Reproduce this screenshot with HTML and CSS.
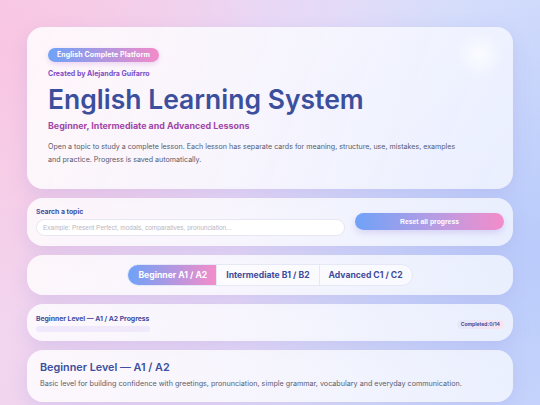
FILE: index.html
```html
<!DOCTYPE html>
<html lang="en">
<head>
<meta charset="utf-8">
<title>English Learning System</title>
<link rel="stylesheet" href="styles.css">
</head>
<body>
<main class="page">
  <section class="card hero">
    <span class="pill">English Complete Platform</span>
    <p class="author">Created by Alejandra Guifarro</p>
    <h1 class="title">English Learning System</h1>
    <h2 class="subtitle">Beginner, Intermediate and Advanced Lessons</h2>
    <p class="intro">Open a topic to study a complete lesson. Each lesson has separate cards for meaning, structure, use, mistakes, examples and practice. Progress is saved automatically.</p>
  </section>

  <section class="card search">
    <div class="search-field">
      <label class="label" for="q">Search a topic</label>
      <input id="q" class="input" type="text" placeholder="Example: Present Perfect, modals, comparatives, pronunciation...">
    </div>
    <button class="reset" type="button">Reset all progress</button>
  </section>

  <section class="card tabs-card">
    <div class="tabs">
      <button class="tab active" type="button">Beginner A1 / A2</button>
      <button class="tab" type="button">Intermediate B1 / B2</button>
      <button class="tab" type="button">Advanced C1 / C2</button>
    </div>
  </section>

  <section class="card progress">
    <div class="progress-info">
      <span class="label">Beginner Level — A1 / A2 Progress</span>
      <div class="bar"><div class="bar-fill" style="width:0%"></div></div>
    </div>
    <span class="done">Completed:0/14</span>
  </section>

  <section class="card level">
    <h3 class="level-title">Beginner Level — A1 / A2</h3>
    <p class="level-desc">Basic level for building confidence with greetings, pronunciation, simple grammar, vocabulary and everyday communication.</p>
  </section>
</main>
</body>
</html>
```

FILE: styles.css
```css
* { box-sizing: border-box; }
html, body { margin: 0; height: 100%; }
body {
  font-family: Inter, "Noto Sans", sans-serif;
  background:
    radial-gradient(circle at 0% 12%, #f9c6e2 0%, rgba(249,198,226,0) 42%),
    radial-gradient(circle at 102% 62%, #b9cbfb 0%, rgba(185,203,251,0) 52%),
    linear-gradient(100deg, #f5d4ec 0%, #e8d8f6 45%, #dbe1fb 75%, #d0dbfb 100%);
  overflow: hidden;
}
.page {
  padding: 27px 27px 0;
  display: flex;
  flex-direction: column;
  gap: 9px;
}
.card {
  background: linear-gradient(110deg, rgba(255,255,255,0.82), rgba(246,248,255,0.78));
  border-radius: 16px;
  box-shadow: 0 6px 18px rgba(150,140,220,0.22);
}
.hero {
  padding: 21px 20px 0 21px;
  height: 162px;
  background:
    radial-gradient(circle at 93% 17%, rgba(255,255,255,0.75) 0%, rgba(255,255,255,0) 5%),
    linear-gradient(110deg, rgba(255,255,255,0.84), rgba(244,246,255,0.8));
}
.pill {
  display: block;
  width: max-content;
  height: 14px;
  line-height: 14px;
  padding: 0 9px;
  border-radius: 8px;
  background: linear-gradient(90deg, #6ea2f8, #f28bc8);
  color: #fff;
  font-size: 7px;
  font-weight: 700;
  letter-spacing: 0.1px;
  box-shadow: 0 2px 5px rgba(200,130,220,0.3);
}
.author {
  margin: 7px 0 0;
  font-size: 7px;
  line-height: 9px;
  font-weight: 700;
  color: #7d4ec6;
}
.title {
  margin: 5px 0 0;
  font-size: 26.5px;
  line-height: 32px;
  font-weight: 600;
  color: #3b4f9d;
  letter-spacing: 0;
}
.subtitle {
  margin: 5px 0 0;
  font-size: 8.9px;
  line-height: 12px;
  font-weight: 700;
  color: #a046a6;
}
.intro {
  margin: 8px 0 0;
  font-size: 7.1px;
  line-height: 13px;
  color: #555a6e;
  max-width: 416px;
}
.search {
  display: flex;
  align-items: flex-start;
  gap: 10px;
  padding: 9px;
  height: 48px;
}
.search-field { flex: 1; display: flex; flex-direction: column; gap: 3px; }
.label {
  font-size: 6.8px;
  line-height: 9px;
  font-weight: 700;
  color: #3f4b9c;
}
.input {
  width: 309px;
  height: 17px;
  border: 1px solid #e6e6f4;
  border-radius: 9px;
  background: #fff;
  padding: 0 6px;
  font-family: "Liberation Sans", Arial, sans-serif;
  font-size: 6.5px;
  color: #444;
  outline: none;
}
.input::placeholder { color: #b8b8c4; }
.reset {
  margin-top: 6px;
  width: 149px;
  height: 17px;
  border: none;
  border-radius: 9px;
  background: linear-gradient(90deg, #6fa2f8, #b99ce3 55%, #f48cc9);
  color: #fff;
  font-family: "Liberation Sans", Arial, sans-serif;
  font-size: 6.8px;
  font-weight: bold;
  box-shadow: 0 3px 6px rgba(160,140,230,0.3);
}
.tabs-card {
  height: 40px;
  display: flex;
  justify-content: center;
  align-items: center;
}
.tabs {
  display: flex;
  height: 22px;
  border: 1px solid #e6e8f5;
  border-radius: 11px;
  overflow: hidden;
  background: rgba(255,255,255,0.6);
}
.tab {
  border: none;
  background: transparent;
  font-family: Inter, sans-serif;
  font-size: 8.6px;
  font-weight: 700;
  color: #3f4b9c;
  padding: 0 9px;
  border-left: 1px solid #e6e8f5;
}
.tab:first-child { border-left: none; padding: 0 9px 0 10px; }
.tab.active {
  background: linear-gradient(90deg, #6fa2f8, #f48cc9);
  color: #fff;
}
.progress {
  height: 37px;
  display: flex;
  align-items: center;
  justify-content: space-between;
  padding: 0 9px;
}
.progress-info { display: flex; flex-direction: column; gap: 3px; }
.bar {
  width: 114px;
  height: 6px;
  border-radius: 3px;
  background: #efe9fb;
  overflow: hidden;
}
.bar-fill { height: 100%; background: linear-gradient(90deg, #6fa2f8, #f48cc9); }
.done {
  margin-top: 4px;
  height: 9px;
  line-height: 9px;
  padding: 0 4px;
  border-radius: 5px;
  background: linear-gradient(90deg, #e4e8fb, #fbe3ee);
  font-size: 5px;
  font-weight: 700;
  color: #4a4f9c;
}
.level {
  height: 52px;
  padding: 11px 13px;
}
.level-title {
  margin: 0;
  font-size: 10.8px;
  line-height: 14px;
  font-weight: 600;
  color: #3b4f9d;
}
.level-desc {
  margin: 4px 0 0;
  font-size: 7.2px;
  color: #595d70;
}
```
